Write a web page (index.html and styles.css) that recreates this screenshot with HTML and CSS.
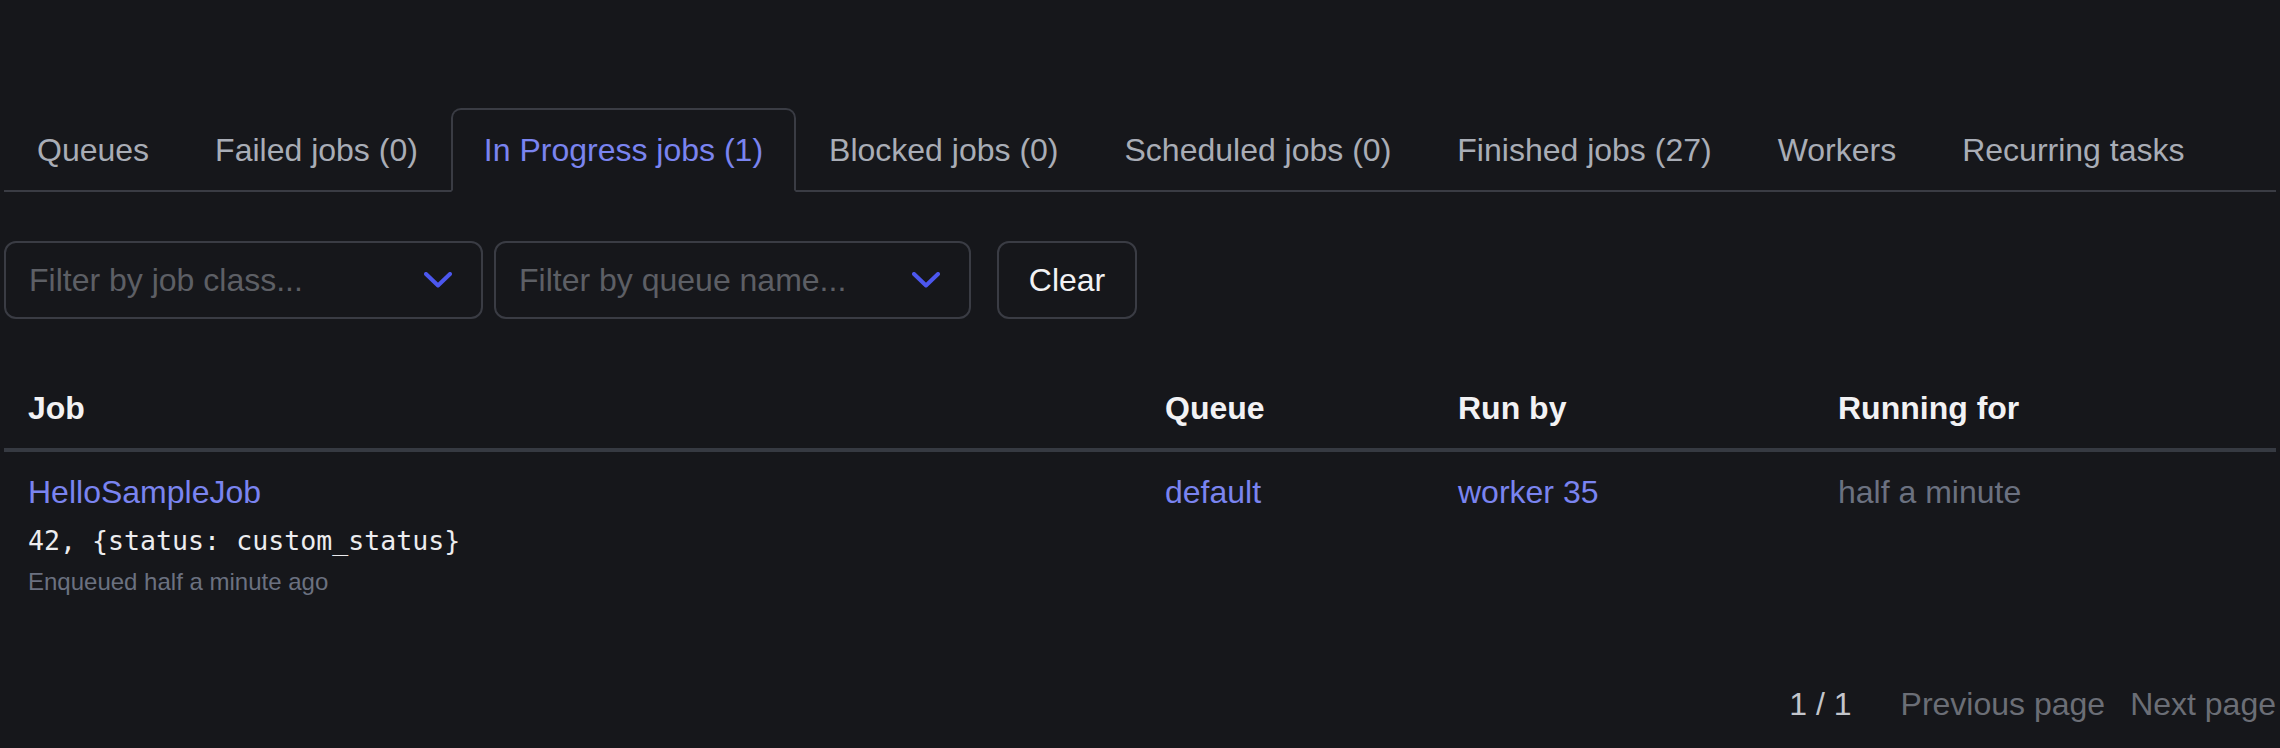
FILE: index.html
```html
<!DOCTYPE html>
<html lang="en">
<head>
<meta charset="utf-8">
<title>Jobs – In Progress</title>
<link rel="stylesheet" href="styles.css">
</head>
<body>
<main class="page">
  <nav class="tabs">
    <ul class="tab-list">
      <li class="tab"><a href="#">Queues</a></li>
      <li class="tab"><a href="#">Failed jobs (0)</a></li>
      <li class="tab is-active"><a href="#">In Progress jobs (1)</a></li>
      <li class="tab"><a href="#">Blocked jobs (0)</a></li>
      <li class="tab"><a href="#">Scheduled jobs (0)</a></li>
      <li class="tab"><a href="#">Finished jobs (27)</a></li>
      <li class="tab"><a href="#">Workers</a></li>
      <li class="tab"><a href="#">Recurring tasks</a></li>
    </ul>
  </nav>

  <form class="filters">
    <div class="select select-class">
      <span class="placeholder">Filter by job class...</span>
      <svg class="chevron" width="28" height="16" viewBox="0 0 28 16"><path d="M2 2 L14 13.5 L26 2" fill="none" stroke="#4c57ee" stroke-width="4" stroke-linecap="round" stroke-linejoin="round"/></svg>
    </div>
    <div class="select select-queue">
      <span class="placeholder">Filter by queue name...</span>
      <svg class="chevron" width="28" height="16" viewBox="0 0 28 16"><path d="M2 2 L14 13.5 L26 2" fill="none" stroke="#4c57ee" stroke-width="4" stroke-linecap="round" stroke-linejoin="round"/></svg>
    </div>
    <button type="button" class="btn-clear">Clear</button>
  </form>

  <table class="jobs">
    <colgroup>
      <col class="col-job">
      <col class="col-queue">
      <col class="col-runby">
      <col class="col-running">
    </colgroup>
    <thead>
      <tr>
        <th>Job</th>
        <th>Queue</th>
        <th>Run by</th>
        <th>Running for</th>
      </tr>
    </thead>
    <tbody>
      <tr>
        <td>
          <a class="link job-name" href="#">HelloSampleJob</a>
          <div class="args">42, {status: custom_status}</div>
          <div class="meta">Enqueued half a minute ago</div>
        </td>
        <td><a class="link" href="#">default</a></td>
        <td><a class="link" href="#">worker 35</a></td>
        <td class="muted">half a minute</td>
      </tr>
    </tbody>
  </table>

  <nav class="pagination">
    <span class="page-count">1 / 1</span>
    <span class="page-link prev">Previous page</span>
    <span class="page-link next">Next page</span>
  </nav>
</main>
</body>
</html>
```

FILE: styles.css
```css
* { box-sizing: border-box; }

html, body {
  margin: 0;
  padding: 0;
  background: #16171b;
}

body {
  font-family: "Liberation Sans", Arial, Helvetica, sans-serif;
  font-size: 32px;
  color: #a9adb6;
}

.page {
  padding: 108px 4px 0 4px;
}

/* Tabs */
.tab-list {
  list-style: none;
  margin: 0;
  padding: 0;
  display: flex;
  border-bottom: 2px solid #3a3c44;
}

.tab {
  margin-bottom: -2px;
}

.tab a {
  display: block;
  padding: 16px 31px;
  line-height: 48px;
  border: 2px solid transparent;
  border-radius: 10px 10px 0 0;
  color: #a9adb6;
  text-decoration: none;
  white-space: nowrap;
}

.tab.is-active a {
  color: #7a84f0;
  border-color: #3a3c44;
  border-bottom-color: #16171b;
}

/* Filters */
.filters {
  display: flex;
  align-items: stretch;
  margin-top: 49px;
  height: 78px;
}

.select {
  display: flex;
  align-items: center;
  justify-content: space-between;
  height: 78px;
  border: 2px solid #3a3c44;
  border-radius: 12px;
  padding: 0 29px 0 23px;
}

.select-class { width: 479px; }
.select-queue { width: 477px; margin-left: 11px; }

.placeholder {
  color: #5d5f65;
  line-height: 48px;
  white-space: nowrap;
}

.chevron { display: block; flex: none; }

.btn-clear {
  margin-left: 26px;
  width: 140px;
  height: 78px;
  background: transparent;
  border: 2px solid #3a3c44;
  border-radius: 12px;
  color: #f2f2f4;
  font-family: inherit;
  font-size: 32px;
  padding: 0;
  cursor: pointer;
}

/* Table */
.jobs {
  margin-top: 49px;
  width: 2272px;
  border-collapse: collapse;
  table-layout: fixed;
}

.col-job { width: 1137px; }
.col-queue { width: 293px; }
.col-runby { width: 380px; }
.col-running { width: 462px; }

.jobs th {
  text-align: left;
  font-weight: bold;
  color: #f2f2f4;
  padding: 16px 24px;
  line-height: 48px;
  border-bottom: 4px solid #363a42;
}

.jobs td {
  vertical-align: top;
  padding: 16px 24px;
  line-height: 48px;
}

.link {
  color: #7a84f0;
  text-decoration: none;
}

.job-name { display: block; }

.args {
  margin-top: 5px;
  font-family: "DejaVu Sans Mono", "Liberation Mono", monospace;
  font-size: 26.6px;
  line-height: 40px;
  color: #ececef;
  white-space: nowrap;
}

.meta {
  margin-top: 3px;
  font-size: 24px;
  line-height: 36px;
  color: #6b7180;
}

.muted { color: #6b7180; }

/* Pagination */
.pagination {
  display: flex;
  justify-content: flex-end;
  margin-top: 64px;
  line-height: 48px;
}

.page-count { color: #c3c5cb; }

.page-link { color: #6b6e76; }

.prev { margin-left: 49px; }
.next { margin-left: 25px; }
```
